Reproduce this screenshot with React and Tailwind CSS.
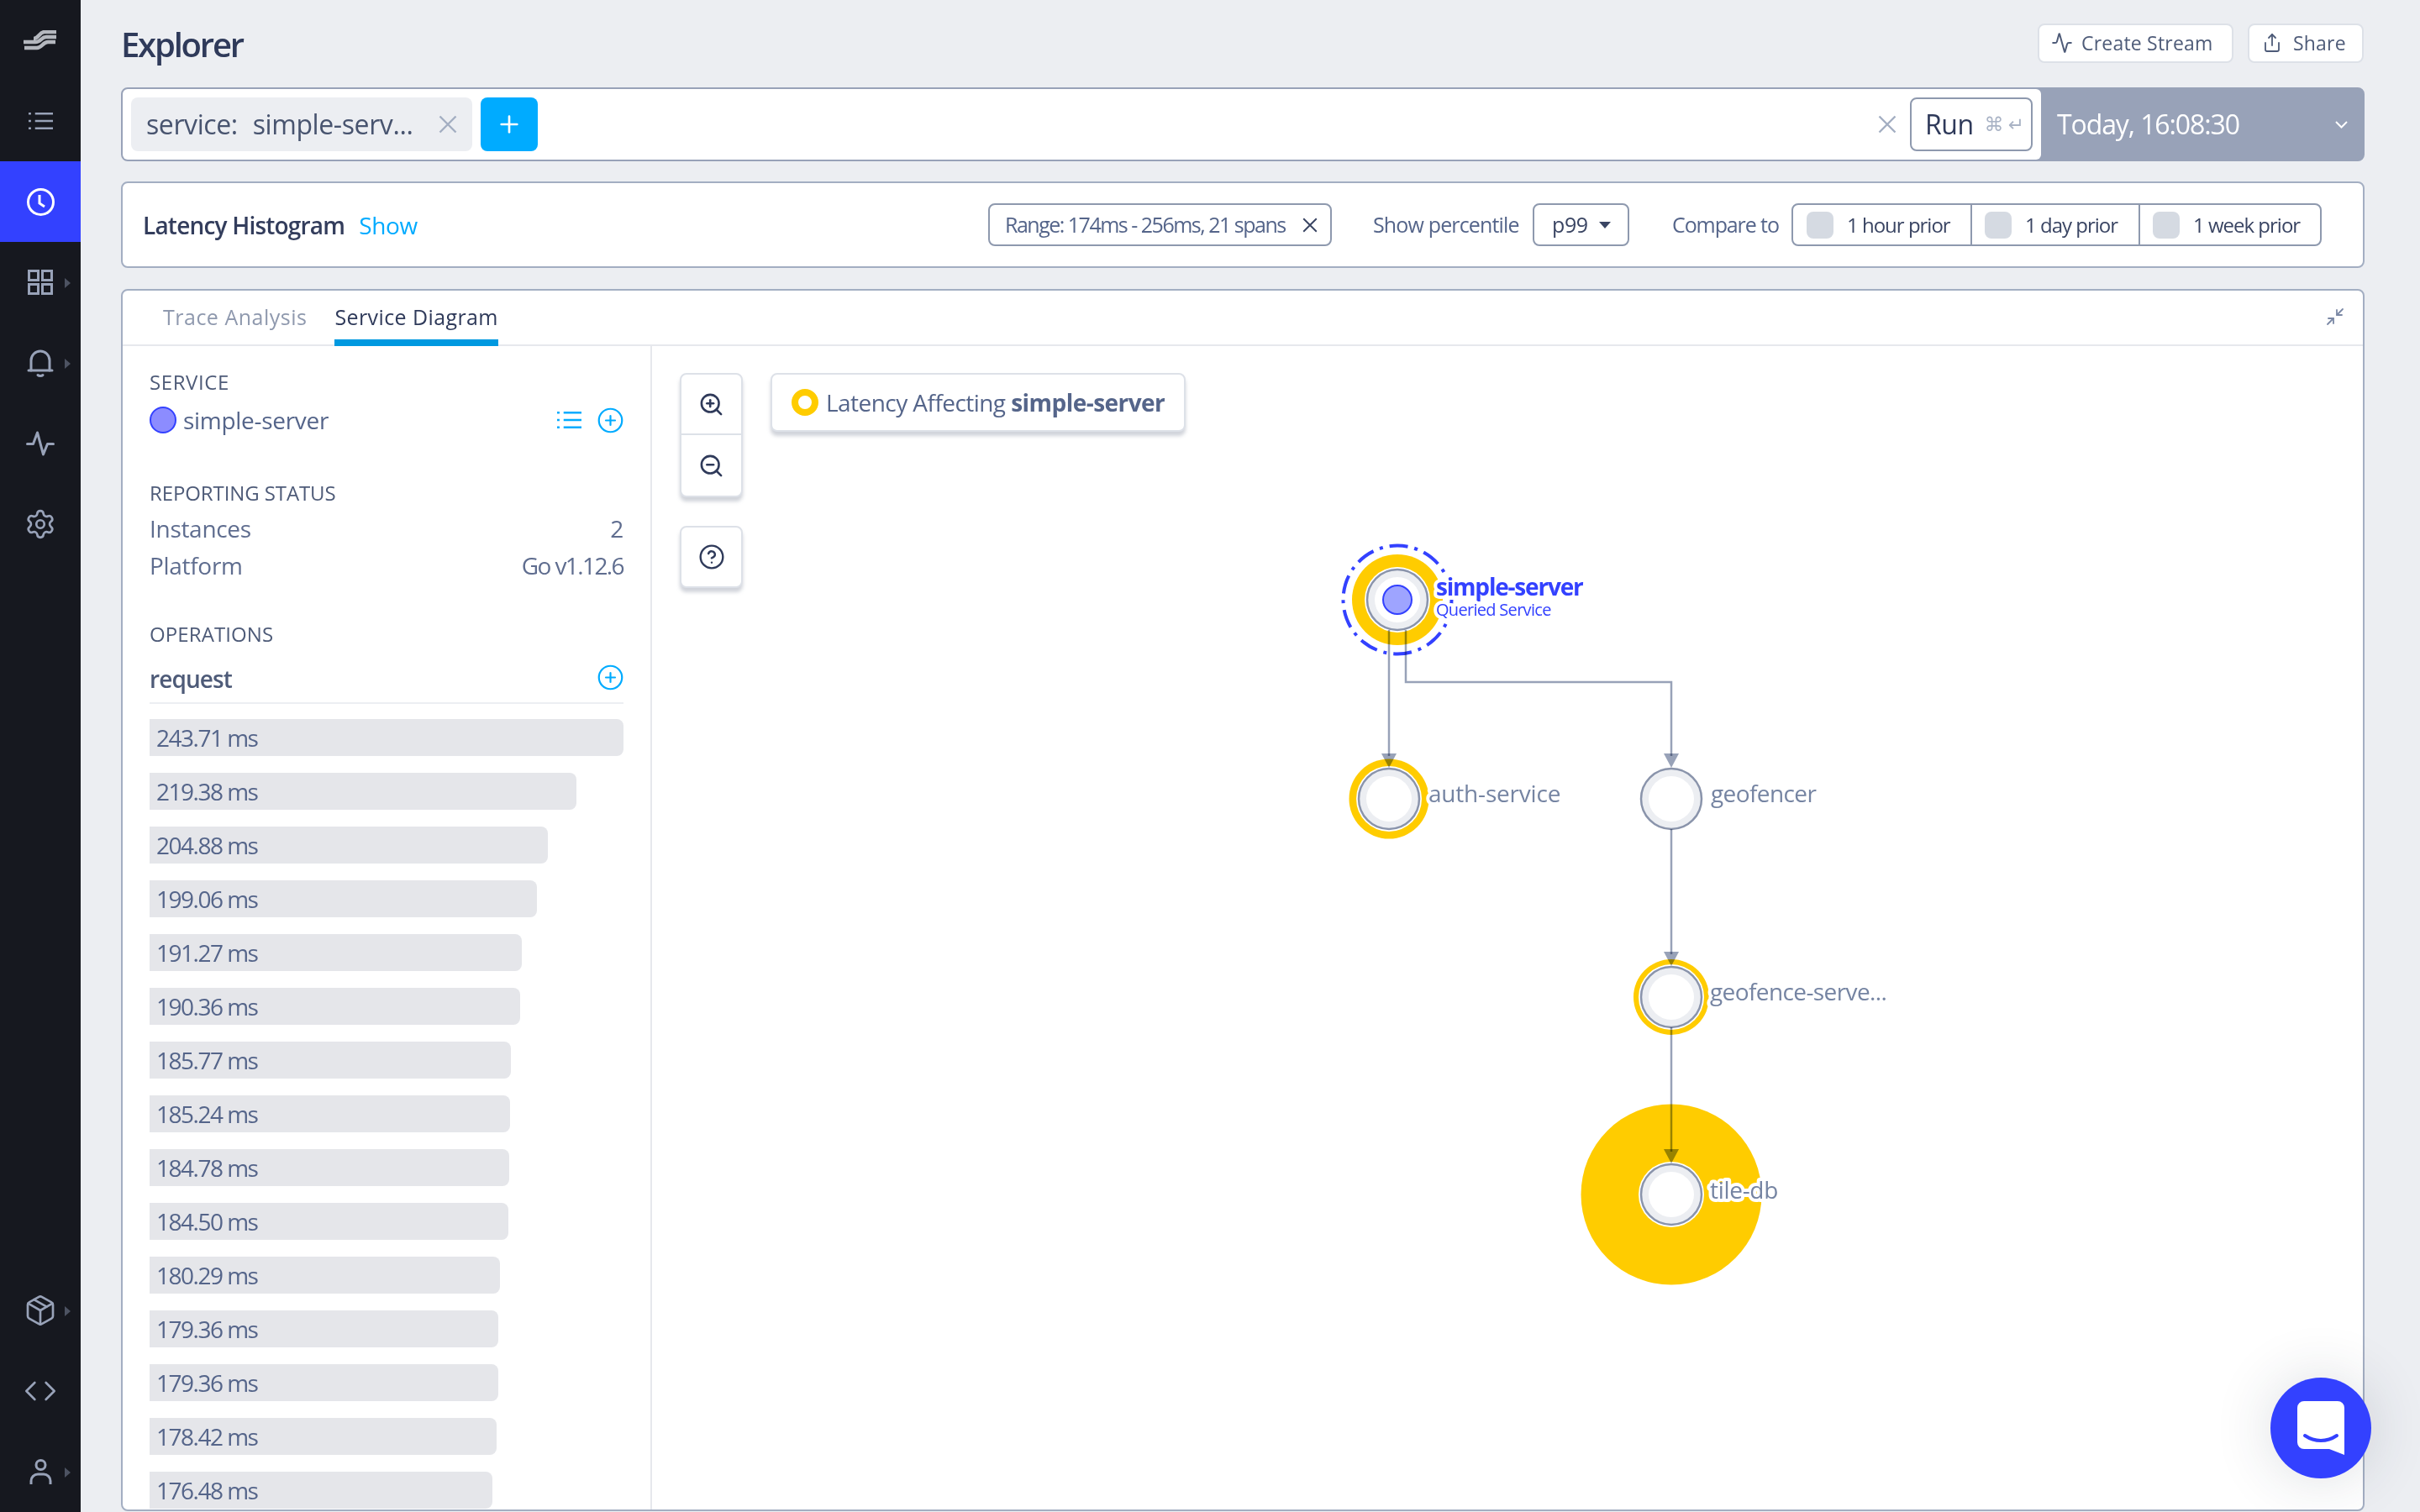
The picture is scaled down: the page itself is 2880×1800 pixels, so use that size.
import React from 'react';
import { Activity, CircleHelp, CirclePlus, Code, Minimize2, Package, Plus, Settings, Share, ZoomIn, ZoomOut } from 'lucide-react';

const latencies = ['243.71', '219.38', '204.88', '199.06', '191.27', '190.36', '185.77', '185.24', '184.78', '184.50', '180.29', '179.36', '179.36', '178.42', '176.48'];

const Cross = ({ size = 22, className = '' }) => (
    <svg width={size} height={size} viewBox="0 0 22 22" fill="none" stroke="currentColor" strokeWidth="2.4" className={className}>
        <path d="M1.5 1.5l19 19M20.5 1.5l-19 19" />
    </svg>
);

const ListIcon = ({ className = '' }) => (
    <svg width="29" height="22" viewBox="0 0 30 22" fill="none" stroke="currentColor" strokeWidth="2.6" className={className}>
        <path d="M8 2h22M8 11h22M8 20h22" />
        <path d="M0 2h3M0 11h3M0 20h3" />
    </svg>
);

const Caret = () => (
    <svg width="7" height="12" viewBox="0 0 7 12" className="absolute left-[77px] top-[43px] text-[#4d5362]" fill="currentColor">
        <path d="M0 0l7 6-7 6z" />
    </svg>
);

const NavItem = ({ children, active, caret }) => (
    <div className={`relative w-[96px] h-[96px] flex items-center justify-center ${active ? 'bg-[#3341ff] text-white' : 'text-[#98a2b8]'}`}>
        {children}
        {caret && <Caret />}
    </div>
);

const Sidebar = () => (
    <div className="w-[96px] h-full shrink-0 bg-[#16181f] flex flex-col justify-between">
        <div>
            <NavItem>
                <svg width="40" height="24" viewBox="0 0 40 24" fill="none" stroke="#b4b7be" strokeWidth="4.500">
                    <path d="M12 10c6 0 7-8 13-8h14" />
                    <path d="M0 14h14c7 0 7-6 13-6h12" />
                    <path d="M1 21h15c6 0 7-7 13-7h9" />
                </svg>
            </NavItem>
            <NavItem><ListIcon /></NavItem>
            <NavItem active>
                <svg width="33" height="33" viewBox="0 0 33 33" fill="none" stroke="currentColor" strokeWidth="3">
                    <circle cx="16.5" cy="16.5" r="15" />
                    <path d="M15 8v10l6 4" />
                </svg>
            </NavItem>
            <NavItem caret>
                <svg width="30" height="30" viewBox="0 0 30 30" fill="none" stroke="currentColor" strokeWidth="3">
                    <rect x="1.5" y="1.5" width="11" height="11" />
                    <rect x="17.5" y="1.5" width="11" height="11" />
                    <rect x="1.5" y="17.5" width="11" height="11" />
                    <rect x="17.5" y="17.5" width="11" height="11" />
                </svg>
            </NavItem>
            <NavItem caret>
                <svg width="32" height="33" viewBox="0 0 32 33" fill="none" stroke="currentColor" strokeWidth="3" strokeLinecap="round">
                    <path d="M5 25V13a11 11 0 0 1 22 0v12" />
                    <path d="M2 25h28" />
                    <path d="M13 30.500c1.500 1.300 4.500 1.300 6 0" />
                </svg>
            </NavItem>
            <NavItem>
                <svg width="34" height="30" viewBox="0 0 34 30" fill="none" stroke="currentColor" strokeWidth="3" strokeLinecap="round" strokeLinejoin="round">
                    <path d="M1.500 15.500h7L13.500 2l7 26 5-12.500h7" />
                </svg>
            </NavItem>
            <NavItem><Settings size={38} strokeWidth={1.7} /></NavItem>
        </div>
        <div>
            <NavItem caret><Package size={40} strokeWidth={1.6} /></NavItem>
            <NavItem><Code size={40} strokeWidth={1.6} /></NavItem>
            <NavItem caret>
                <svg width="27" height="30" viewBox="0 0 27 30" fill="none" stroke="currentColor" strokeWidth="3">
                    <circle cx="13.500" cy="7" r="5.500" />
                    <path d="M2 30v-4a8 8 0 0 1 8-8h7a8 8 0 0 1 8 8v4" />
                </svg>
            </NavItem>
        </div>
    </div>
);

const SearchBar = () => (
    <div className="h-[88px] flex rounded-[8px] border-2 border-[#98a2b8] bg-[#98a2b8] overflow-hidden">
        <div className="flex-1 bg-white rounded-r-[6px] flex items-center pl-[10px] pr-[10px]">
            <div className="w-[406px] h-[64px] rounded-[8px] bg-[#eceef2] flex items-center justify-between pl-[18px] pr-[18px] mr-[10px]">
                <span className="text-[32px] text-[#48546f] whitespace-pre tracking-[-0.4px] [word-spacing:1px]">service:  simple-serv...</span>
                <Cross className="text-[#a3aec2]" />
            </div>
            <div className="w-[68px] h-[64px] rounded-[8px] bg-[#00abff] flex items-center justify-center text-white">
                <Plus size={32} strokeWidth={2} />
            </div>
            <div className="flex-1" />
            <Cross className="text-[#a3aec2] mr-[16px]" />
            <div className="w-[146px] h-[64px] rounded-[8px] border-2 border-[#8e99ae] flex items-center pl-[16px]">
                <span className="text-[32px] text-[#2f3a5a] tracking-[-0.5px]">Run</span>
                <span className="ml-[13px] text-[23px] text-[#a9b3c5] tracking-[-1px] whitespace-nowrap font-['DejaVu_Sans',sans-serif]">⌘ ↵</span>
            </div>
        </div>
        <div className="w-[383px] flex items-center justify-between pl-[19px] pr-[18px] text-white">
            <span className="text-[32px] font-medium tracking-[-1.100px]">Today, 16:08:30</span>
            <svg width="15" height="9" viewBox="0 0 15 9" fill="none" stroke="currentColor" strokeWidth="2"><path d="M1 1l6.500 6.500L14 1" /></svg>
        </div>
    </div>
);

const CompareOption = ({ label, className }) => (
    <div className={`flex items-center h-full ${className}`}>
        <span className="w-[32px] h-[32px] rounded-[8px] bg-[#d5dae2]" />
        <span className="ml-[16px] text-[24px] text-[#3a4563] tracking-[-1px] whitespace-nowrap">{label}</span>
    </div>
);

const Histogram = () => (
    <div className="mt-[24px] h-[103px] rounded-[8px] border-2 border-[#a3aec2] bg-white flex items-center pl-[24px] pr-[49px]">
        <span className="text-[28px] font-semibold text-[#333d5c] tracking-[-0.8px] whitespace-nowrap">Latency Histogram</span>
        <span className="ml-[17px] text-[28px] text-[#00abff] tracking-[-0.4px]">Show</span>
        <div className="ml-auto w-[409px] h-[51px] rounded-[8px] border-2 border-[#8e99ae] flex items-center justify-between pl-[18px] pr-[15px]">
            <span className="text-[25px] text-[#55658a] tracking-[-1.500px] whitespace-nowrap">Range: 174ms - 256ms, 21 spans</span>
            <Cross size={18} className="text-[#3a4563]" />
        </div>
        <span className="ml-[49px] w-[173px] text-[25px] text-[#55658a] tracking-[-0.850px] whitespace-nowrap">Show percentile</span>
        <div className="ml-[17px] w-[115px] h-[51px] rounded-[8px] border-2 border-[#8e99ae] flex items-center justify-between pl-[21px] pr-[20px]">
            <span className="text-[25px] text-[#3a4563] tracking-[-0.4px]">p99</span>
            <svg width="14" height="8" viewBox="0 0 14 8" fill="#3a4563"><path d="M0 0h14l-7 8z" /></svg>
        </div>
        <span className="ml-[51px] w-[126px] text-[25px] text-[#55658a] tracking-[-1.100px] whitespace-nowrap">Compare to</span>
        <div className="ml-[16px] w-[631px] h-[51px] rounded-[8px] border-2 border-[#8e99ae] flex items-center">
            <CompareOption label="1 hour prior" className="w-[213px] pl-[16px] border-r-2 border-[#8e99ae]" />
            <CompareOption label="1 day prior" className="w-[200px] pl-[15px] border-r-2 border-[#8e99ae]" />
            <CompareOption label="1 week prior" className="flex-1 pl-[15px]" />
        </div>
    </div>
);

const ServicePanel = () => (
    <div className="w-[630px] shrink-0 border-r-2 border-[#e6e8ed] pl-[32px] pr-[32px] pt-[29px] overflow-hidden">
        <div className="text-[24px] leading-[28px] font-medium text-[#4e5b78] tracking-[0.6px]">SERVICE</div>
        <div className="mt-[15px] h-[32px] flex items-center">
            <span className="w-[32px] h-[32px] rounded-full bg-[#8c8cff] border-2 border-[#3341ff]" />
            <span className="ml-[8px] text-[28px] text-[#55658a] tracking-[-0.3px]">simple-server</span>
            <ListIcon className="ml-auto text-[#00abff]" />
            <CirclePlus size={33} strokeWidth={1.6} className="ml-[18px] mr-[-1px] text-[#00abff]" />
        </div>
        <div className="mt-[57px] text-[24px] leading-[28px] font-medium text-[#4e5b78] tracking-[-0.1px]">REPORTING STATUS</div>
        <div className="mt-[13px] h-[30px] flex items-center justify-between text-[28px] text-[#5f6d8f] tracking-[-0.3px]">
            <span>Instances</span><span>2</span>
        </div>
        <div className="mt-[14px] h-[30px] flex items-center justify-between text-[28px] text-[#5f6d8f] tracking-[-0.3px]">
            <span>Platform</span><span className="tracking-[-1.600px]">Go v1.12.6</span>
        </div>
        <div className="pt-[53px] text-[24px] leading-[28px] font-medium text-[#4e5b78] tracking-[0.1px]">OPERATIONS</div>
        <div className="mt-[17px] pb-[6px] h-[52px] flex items-center justify-between border-b-2 border-[#eceef2]">
            <span className="text-[28px] font-semibold text-[#4e5b78] tracking-[-0.9px]">request</span>
            <CirclePlus size={33} strokeWidth={1.6} className="mr-[-1px] mt-[-4px] text-[#00abff]" />
        </div>
        <div className="mt-[18px] flex flex-col gap-[20px]">
            {latencies.map((ms, i) => (
                <div key={i} className="h-[44px] shrink-0 bg-[#e5e6ea] rounded-r-[8px] flex items-center pl-[8px]" style={{ width: `${(parseFloat(ms) / 243.71) * 564}px` }}>
                    <span className="text-[28px] text-[#55658a] tracking-[-1.500px]">{ms} ms</span>
                </div>
            ))}
        </div>
    </div>
);

const Node = ({ cx, cy, halo }) => (
    <g>
        {halo > 0 && <circle cx={cx} cy={cy} r={halo} fill="#ffcc00" />}
        <circle cx={cx} cy={cy} r="39" fill="#fff" />
        <circle cx={cx} cy={cy} r="36" fill="#eceef2" stroke="#8a94ab" strokeWidth="2.500" />
        <circle cx={cx} cy={cy} r="27" fill="#fff" />
    </g>
);

const Label = ({ x, y, size = 28, weight = 400, fill = '#7584a2', className = '', children }) => (
    <text x={x} y={y} fontSize={size} fontWeight={weight} fill={fill} stroke="#fff" strokeWidth="8" strokeLinejoin="round" paintOrder="stroke" className={className}>{children}</text>
);

const Diagram = () => (
    <svg className="absolute inset-0" width="2036" height="1386" viewBox="776 412 2036 1386">
        <Node cx={1663} cy={714} halo={54} />
        <Node cx={1653} cy={951} halo={47.500} />
        <Node cx={1989} cy={951} />
        <Node cx={1989} cy={1187} halo={45} />
        <Node cx={1989} cy={1422} halo={107.500} />
        <circle cx={1663} cy={714} r="64.500" fill="none" stroke="#3341ff" strokeWidth="4" strokeDasharray="22 8 4 8" />
        <circle cx={1663} cy={714} r="17" fill="#9ea4ff" stroke="#3341ff" strokeWidth="2" />
        <g className="mix-blend-multiply" fill="none" stroke="#98a2b8" strokeWidth="2.500">
            <path d="M1653 750V900" />
            <path d="M1673 750V812H1989V900" />
            <path d="M1989 987V1136" />
            <path d="M1989 1223V1371" />
        </g>
        <g className="mix-blend-multiply" fill="#98a2b8">
            <path d="M1644 897h18l-9 17z" />
            <path d="M1980 897h18l-9 17z" />
            <path d="M1980 1133h18l-9 17z" />
            <path d="M1980 1368h18l-9 17z" />
        </g>
        <Label x={1709} y={709} weight={700} fill="#3341ff" className="tracking-[-1.200px]">simple-server</Label>
        <Label x={1709} y={733} size={20} fill="#3341ff" className="tracking-[-0.700px]">Queried Service</Label>
        <Label x={1700} y={955} className="tracking-[-0.200px]">auth-service</Label>
        <Label x={2036} y={955} className="tracking-[-0.600px]">geofencer</Label>
        <Label x={2035} y={1191} className="tracking-[-0.600px]">geofence-serve...</Label>
        <Label x={2035} y={1427} className="tracking-[-0.300px]">tile-db</Label>
    </svg>
);

const FloatBox = ({ children, className = '' }) => (
    <div className={`w-[75px] bg-white rounded-[8px] border-2 border-[#dde1e8] shadow-[0_5px_4px_rgba(120,130,150,0.35)] ${className}`}>{children}</div>
);

const DiagramPanel = () => (
    <div className="relative flex-1">
        <Diagram />
        <div className="absolute left-[33px] top-[32px] flex items-start gap-[33px]">
            <div className="flex flex-col gap-[34px]">
                <FloatBox>
                    <div className="h-[72px] flex items-center justify-center border-b-2 border-[#dde1e8] text-[#2f3a5a]"><ZoomIn size={31} strokeWidth={2} /></div>
                    <div className="h-[72px] flex items-center justify-center text-[#2f3a5a]"><ZoomOut size={31} strokeWidth={2} /></div>
                </FloatBox>
                <FloatBox className="h-[74px] flex items-center justify-center text-[#2f3a5a]"><CircleHelp size={32} strokeWidth={1.8} /></FloatBox>
            </div>
            <div className="w-[494px] h-[70px] bg-white rounded-[8px] border-2 border-[#dde1e8] shadow-[0_5px_4px_rgba(120,130,150,0.35)] flex items-center pl-[23px]">
                <span className="w-[32px] h-[32px] rounded-full border-[8px] border-[#ffcc00]" />
                <span className="ml-[9px] text-[28px] text-[#55658a] tracking-[-0.55px] whitespace-nowrap">Latency Affecting <b className="font-bold">simple-server</b></span>
            </div>
        </div>
    </div>
);

const ChatButton = () => (
    <div className="absolute left-[2702px] top-[1640px] w-[120px] h-[120px] rounded-full bg-[#3341ff] flex items-center justify-center shadow-[0_0_70px_rgba(40,50,70,0.16)]">
        <svg width="56" height="64" viewBox="0 0 56 64">
            <path d="M8 0h40a8 8 0 0 1 8 8v56l-18-7H8a8 8 0 0 1-8-8V8a8 8 0 0 1 8-8z" fill="#fff" />
            <path d="M9 41c12 8 26 8 38 0" fill="none" stroke="#3341ff" strokeWidth="4" strokeLinecap="round" />
        </svg>
    </div>
);

const App = () => (
    <div className="relative w-[2880px] h-[1800px] flex overflow-hidden bg-[#eceef2] font-['Open_Sans',sans-serif]">
        <Sidebar />
        <div className="flex-1 min-w-0 flex flex-col pl-[48px] pr-[66px] pb-[1px]">
            <div className="h-[104px] shrink-0 flex items-center justify-between">
                <div className="mt-[2px] text-[40px] font-semibold text-[#2f3a5a] tracking-[-2.200px]">Explorer</div>
                <div className="flex gap-[17px] mr-[1px] mt-[-2px]">
                    <div className="w-[233px] h-[47px] rounded-[8px] border-2 border-[#dde1e8] bg-white flex items-center pl-[14px] text-[#4e5b78]">
                        <Activity size={26} strokeWidth={1.8} />
                        <span className="ml-[10px] text-[23px] tracking-[0.2px] whitespace-nowrap">Create Stream</span>
                    </div>
                    <div className="w-[138px] h-[47px] rounded-[8px] border-2 border-[#dde1e8] bg-white flex items-center pl-[15px] text-[#4e5b78]">
                        <Share size={24} strokeWidth={1.8} />
                        <span className="ml-[13px] text-[23px] tracking-[0.2px]">Share</span>
                    </div>
                </div>
            </div>
            <SearchBar />
            <Histogram />
            <div className="mt-[25px] flex-1 min-h-0 rounded-[8px] border-2 border-[#a3aec2] bg-white flex flex-col overflow-hidden">
                <div className="relative h-[66px] shrink-0 border-b-2 border-[#e6e8ed] flex pl-[48px] gap-[33px]">
                    <div className="h-[66px] flex items-center pb-[2px] text-[25px] text-[#8f99ae] tracking-[0.5px] whitespace-nowrap">Trace Analysis</div>
                    <div className="h-[66px] flex items-center border-b-[8px] border-[#0099e0] pt-[6px] text-[25px] text-[#2f3a5a] tracking-[0.4px] whitespace-nowrap">Service Diagram</div>
                    <Minimize2 size={24} strokeWidth={1.8} className="absolute right-[21px] top-[19px] text-[#7b88a5]" />
                </div>
                <div className="flex-1 min-h-0 flex">
                    <ServicePanel />
                    <DiagramPanel />
                </div>
            </div>
        </div>
        <ChatButton />
    </div>
);

export default App;
